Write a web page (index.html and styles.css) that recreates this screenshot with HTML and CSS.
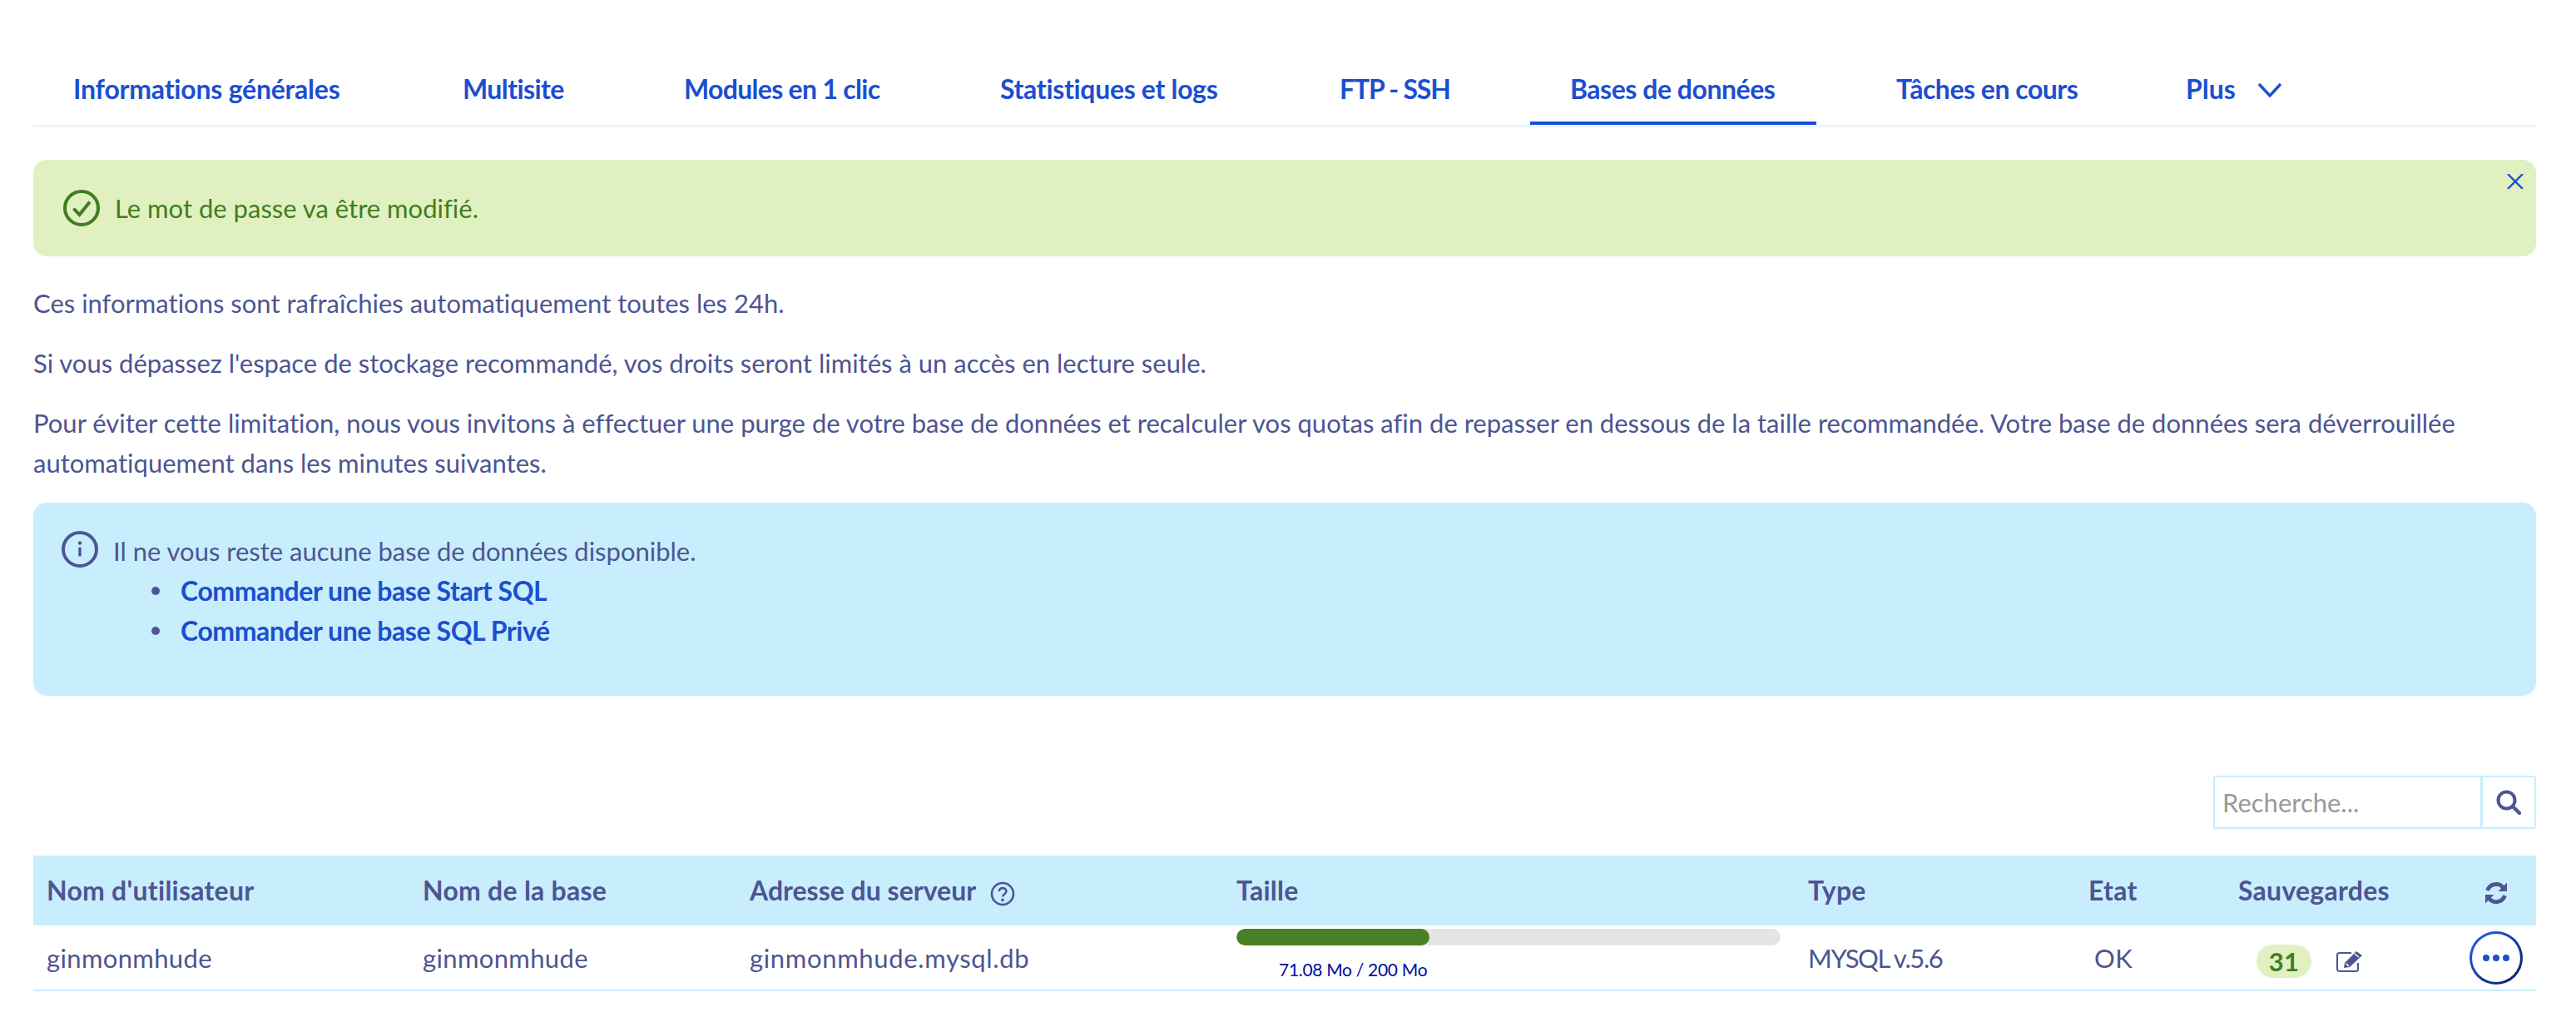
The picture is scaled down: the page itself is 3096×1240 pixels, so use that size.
FILE: index.html
```html
<!DOCTYPE html>
<html lang="fr">
<head>
<meta charset="utf-8">
<title>Bases de données</title>
<link rel="stylesheet" href="styles.css">
</head>
<body>
<div class="page">
  <nav class="tabs">
    <a class="tab t1">Informations générales</a>
    <a class="tab t2">Multisite</a>
    <a class="tab t3">Modules en 1 clic</a>
    <a class="tab t4">Statistiques et logs</a>
    <a class="tab t5">FTP - SSH</a>
    <a class="tab t6 active">Bases de données</a>
    <a class="tab t7">Tâches en cours</a>
    <a class="tab t8">Plus<svg class="chevron" viewBox="0 0 30 18"><path d="M2 2 L15 16 L28 2" fill="none" stroke="currentColor" stroke-width="3.4"/></svg></a>
  </nav>

  <div class="alert success">
    <svg class="alert-icon" viewBox="0 0 44 44"><circle cx="22" cy="22" r="20" fill="none" stroke="currentColor" stroke-width="4"/><path d="M12.5 22.5 L19.5 30 L32 14.5" fill="none" stroke="currentColor" stroke-width="4"/></svg>
    <span>Le mot de passe va être modifié.</span>
    <svg class="close" viewBox="0 0 20 18"><path d="M1 0 L19 18 M19 0 L1 18" stroke="currentColor" stroke-width="2.4"/></svg>
  </div>

  <p class="para first">Ces informations sont rafraîchies automatiquement toutes les 24h.</p>
  <p class="para second">Si vous dépassez l'espace de stockage recommandé, vos droits seront limités à un accès en lecture seule.</p>
  <p class="para third">Pour éviter cette limitation, nous vous invitons à effectuer une purge de votre base de données et recalculer vos quotas afin de repasser en dessous de la taille recommandée. Votre base de données sera déverrouillée automatiquement dans les minutes suivantes.</p>

  <div class="alert info">
    <svg class="alert-icon" viewBox="0 0 44 44"><circle cx="22" cy="22" r="20" fill="none" stroke="currentColor" stroke-width="4"/><circle cx="22" cy="14.5" r="2.2" fill="currentColor"/><rect x="20.3" y="19.5" width="3.4" height="11" rx="1" fill="currentColor"/></svg>
    <div class="info-body">
      <div>Il ne vous reste aucune base de données disponible.</div>
      <ul class="links">
        <li><a>Commander une base Start SQL</a></li>
        <li><a>Commander une base SQL Privé</a></li>
      </ul>
    </div>
  </div>

  <div class="search-row">
    <div class="search">
      <span class="search-input">Recherche...</span>
      <span class="search-btn">
        <svg viewBox="0 0 30 30"><circle cx="12.5" cy="12.5" r="10" fill="none" stroke="currentColor" stroke-width="4"/><path d="M20 20 L28 28" stroke="currentColor" stroke-width="4.4" stroke-linecap="round"/></svg>
      </span>
    </div>
  </div>

  <table class="grid">
    <colgroup>
      <col class="c1"><col class="c2"><col class="c3"><col class="c4"><col class="c5"><col class="c6"><col class="c7"><col class="c8">
    </colgroup>
    <thead>
      <tr>
        <th>Nom d'utilisateur</th>
        <th>Nom de la base</th>
        <th class="address">Adresse du serveur<svg class="help" viewBox="0 0 30 30"><circle cx="15" cy="15" r="13" fill="none" stroke="currentColor" stroke-width="2.6"/><path d="M10.8 12 C10.8 6.8 19.4 6.8 19.4 12 C19.4 15.4 15 15.2 15 18.6" fill="none" stroke="currentColor" stroke-width="2.6"/><circle cx="15" cy="22.4" r="1.8" fill="currentColor"/></svg></th>
        <th>Taille</th>
        <th>Type</th>
        <th>Etat</th>
        <th>Sauvegardes</th>
        <th class="refresh-cell">
          <svg class="refresh" viewBox="0 0 28 28"><path d="M3.5 11 A11 11 0 0 1 22.5 7.5" fill="none" stroke="currentColor" stroke-width="4.8"/><path d="M27 1.5 V12 H16.5 Z" fill="currentColor"/><path d="M24.5 17 A11 11 0 0 1 5.5 20.5" fill="none" stroke="currentColor" stroke-width="4.8"/><path d="M1 26.5 V16 H11.5 Z" fill="currentColor"/></svg>
        </th>
      </tr>
    </thead>
    <tbody>
      <tr>
        <td>ginmonmhude</td>
        <td>ginmonmhude</td>
        <td class="host">ginmonmhude.mysql.db</td>
        <td class="size-cell">
          <div class="bar"><div class="fill"></div></div>
          <div class="bar-label">71.08 Mo / 200 Mo</div>
        </td>
        <td class="type">MYSQL v.5.6</td>
        <td class="state">OK</td>
        <td class="saves">
          <span class="badge">31</span>
          <svg class="edit" viewBox="0 0 32 26"><path d="M26 15 V22 Q26 25 23 25 H4 Q1 25 1 22 V6 Q1 3 4 3 H18" fill="none" stroke="currentColor" stroke-width="2"/><path d="M9 21 L10 15 L24 1 L31 6 L16 20 Z" fill="currentColor"/><path d="M11.5 15.5 L15 19 M22 4 L27 8" stroke="#fff" stroke-width="1.4"/></svg>
        </td>
        <td class="action-cell">
          <span class="more"><span class="more-inner"><i></i><i></i><i></i></span></span>
        </td>
      </tr>
    </tbody>
  </table>
</div>
</body>
</html>
```
FILE: styles.css
```css
* { box-sizing: border-box; }
html, body { margin: 0; padding: 0; background: #fff; }
body {
  font-family: "Lato", "Open Sans", sans-serif;
  font-size: 31px;
  line-height: 48px;
  color: #4d5592;
  font-variant-ligatures: none;
}
.page { padding: 0 48px 0 40px; }

.tabs {
  display: flex;
  height: 153px;
  padding-top: 83px;
  border-bottom: 3px solid #e8f6fe;
}
.tab {
  height: 67px;
  padding: 0 0 0 48px;
  margin-right: 50px;
  color: #1b4fd0;
  font-weight: 700;
  font-size: 32px;
  white-space: nowrap;
  display: flex;
  align-items: flex-start;
  letter-spacing: -0.22px;
  flex: none;
}
.t1 { width: 418px; }
.t2 { width: 216px; letter-spacing: -0.6px; }
.t3 { width: 330px; letter-spacing: -0.7px; }
.t4 { width: 358px; letter-spacing: -0.32px; }
.t5 { width: 227px; letter-spacing: -1.2px; }
.t6 { width: 344px; margin-right: 48px; letter-spacing: -0.47px; }
.t7 { width: 298px; letter-spacing: -0.5px; }
.t8 { letter-spacing: 0; }
.tab.active { box-shadow: inset 0 -4px 0 #1b4fd0; }
.chevron { width: 30px; height: 18px; margin: 16px 0 0 26px; }

.alert { position: relative; display: flex; border-radius: 16px; }
.success {
  height: 116px;
  margin-top: 39px;
  background: #e1f0c1;
  color: #3f7d20;
  align-items: center;
  padding-left: 36px;
}
.success .alert-icon { margin-right: 18px; }
.alert-icon { width: 44px; height: 44px; flex: none; }
.close {
  position: absolute;
  top: 17px;
  right: 15px;
  width: 20px;
  height: 18px;
  color: #1b4fd0;
}

.para { margin: 0; }
.para.first { margin-top: 32px; }
.para.second { margin-top: 24px; }
.para.third { margin-top: 24px; }

.info {
  height: 232px;
  margin-top: 24px;
  background: #c8eefe;
  padding: 34px 0 0 34px;
}
.info-body { margin-left: 18px; }
.links { margin: 0; padding: 0 0 0 46px; list-style: none; }
.links li { display: flex; align-items: center; gap: 25px; }
.links li::before { content: ""; width: 10px; height: 10px; border-radius: 50%; background: #4d5592; flex: none; }
.links a { color: #1b4fd0; font-weight: 700; font-size: 32px; letter-spacing: -0.43px; }

.search-row { display: flex; justify-content: flex-end; margin-top: 96px; }
.search {
  display: flex;
  width: 388px;
  height: 64px;
  border: 2px solid #c8eefe;
  border-radius: 3px;
}
.search-input { flex: 1; padding-left: 9px; color: #999; line-height: 60px; }
.search-btn {
  width: 65px;
  border-left: 3px solid #c8eefe;
  color: #4d5592;
  display: flex;
  align-items: center;
  justify-content: center;
}
.search-btn svg { width: 30px; height: 30px; }

.grid { width: 100%; margin-top: 32px; border-collapse: collapse; table-layout: fixed; }
.c1 { width: 452px; }
.c2 { width: 393px; }
.c3 { width: 585px; }
.c4 { width: 687px; }
.c5 { width: 337px; }
.c6 { width: 180px; }
.c7 { width: 278px; }
.c8 { width: 96px; }
.grid th {
  height: 84px;
  padding: 0 16px;
  background: #c8eefe;
  font-weight: 700;
  font-size: 32px;
  letter-spacing: 0.25px;
  text-align: left;
  white-space: nowrap;
}
.grid th.address { letter-spacing: 0; }
.grid td { height: 78px; padding: 0 16px; border-bottom: 2px solid #c8eefe; white-space: nowrap; letter-spacing: 0.35px; }
.grid td.host { letter-spacing: 0.65px; }
.help { width: 30px; height: 30px; vertical-align: -7px; margin-left: 17px; }
.refresh-cell { text-align: center !important; }
.refresh { width: 28px; height: 28px; vertical-align: -5px; }

.size-cell { vertical-align: top; padding-top: 4px !important; }
.bar { height: 20px; width: 654px; background: #e5e5e5; border-radius: 10px; overflow: hidden; }
.fill { width: 232px; height: 20px; background: #478124; border-radius: 10px; }
.bar-label { padding-left: 51px; font-size: 21px; letter-spacing: -0.3px; line-height: 36px; margin-top: 11px; color: #000e9c; }
.grid td.type { letter-spacing: -1.4px; }

.state { padding-left: 23px !important; }
.saves { padding-left: 38px !important; }
.badge {
  display: inline-block;
  width: 66px;
  height: 40px;
  line-height: 40px;
  border-radius: 20px;
  background: #e1f0c1;
  color: #3f7d20;
  font-weight: 700;
  text-align: center;
  vertical-align: middle;
}
.edit { width: 32px; height: 26px; margin-left: 22px; vertical-align: middle; }
.action-cell { padding: 0 !important; text-align: center; }
.more {
  display: inline-block;
  width: 64px;
  height: 64px;
  border-radius: 50%;
  padding: 3px;
  background: linear-gradient(135deg, #1b55d6 20%, #0c2a78 80%);
  vertical-align: middle;
}
.more-inner {
  display: flex;
  width: 58px;
  height: 58px;
  border-radius: 50%;
  background: #fff;
  align-items: center;
  justify-content: center;
  gap: 4px;
}
.more-inner i { width: 8px; height: 8px; border-radius: 50%; background: #1b4fd0; }
```
